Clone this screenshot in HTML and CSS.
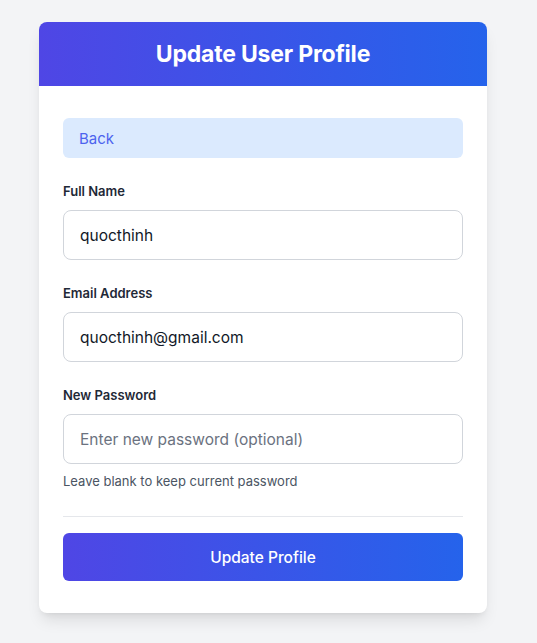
FILE: index.html
```html
<!DOCTYPE html>
<html lang="en">
<head>
<meta charset="utf-8">
<title>Update User Profile</title>
<link rel="stylesheet" href="styles.css">
</head>
<body>
<div class="page">
  <div class="card">
    <div class="card-header">
      <h1 class="title">Update User Profile</h1>
    </div>
    <div class="card-body">
      <a class="back" href="#">Back</a>
      <form class="form">
        <div class="field">
          <label class="label">Full Name</label>
          <input class="input" type="text" value="quocthinh">
        </div>
        <div class="field">
          <label class="label">Email Address</label>
          <input class="input" type="email" value="quocthinh@gmail.com">
        </div>
        <div class="field">
          <label class="label">New Password</label>
          <input class="input" type="password" placeholder="Enter new password (optional)">
          <p class="hint">Leave blank to keep current password</p>
        </div>
        <div class="actions">
          <button class="submit" type="button">Update Profile</button>
        </div>
      </form>
    </div>
  </div>
</div>
</body>
</html>
```
FILE: styles.css
```css
* { box-sizing: border-box; }
html, body { margin: 0; padding: 0; }
body {
  background: #f3f4f6;
  font-family: Inter, "Noto Sans", sans-serif;
  color: #1f2937;
}
.page {
  padding: 22px 50px 30px 39px;
}
.card {
  width: 448px;
  background: #fff;
  border-radius: 8px;
  overflow: hidden;
  box-shadow: 0 10px 15px -3px rgba(0,0,0,0.1), 0 4px 6px -4px rgba(0,0,0,0.1);
}
.card-header {
  height: 64px;
  display: flex;
  align-items: center;
  justify-content: center;
  background: linear-gradient(90deg, #4f46e5, #2563eb);
}
.title {
  margin: 0;
  color: #fff;
  font-size: 23px;
  font-weight: 700;
  letter-spacing: -0.2px;
}
.card-body {
  padding: 32px 24px 32px;
}
.back {
  display: flex;
  align-items: center;
  height: 40px;
  padding: 0 16px;
  background: #dbeafe;
  color: #4d63ee;
  border-radius: 6px;
  text-decoration: none;
  font-size: 15px;
}
.form {
  margin-top: 24px;
  display: flex;
  flex-direction: column;
  gap: 24px;
}
.field {
  display: flex;
  flex-direction: column;
}
.label {
  font-size: 13px;
  font-weight: 600;
  line-height: 18px;
  color: #1f2937;
  margin-bottom: 10px;
}
.input {
  height: 50px;
  border: 1px solid #d1d5db;
  border-radius: 8px;
  padding: 0 16px;
  font-family: inherit;
  font-size: 15.5px;
  color: #111827;
  background: #fff;
  outline: none;
}
.input::placeholder { color: #6b7280; }
.hint {
  margin: 9px 0 0;
  font-size: 13px;
  line-height: 16px;
  color: #4b5563;
}
.actions {
  border-top: 1px solid #e5e7eb;
  padding-top: 16px;
  margin-top: 3px;
}
.submit {
  width: 100%;
  height: 48px;
  border: 0;
  border-radius: 6px;
  background: linear-gradient(90deg, #4f46e5, #2563eb);
  color: #fff;
  font-family: inherit;
  font-size: 15.5px;
  font-weight: 500;
}
```
